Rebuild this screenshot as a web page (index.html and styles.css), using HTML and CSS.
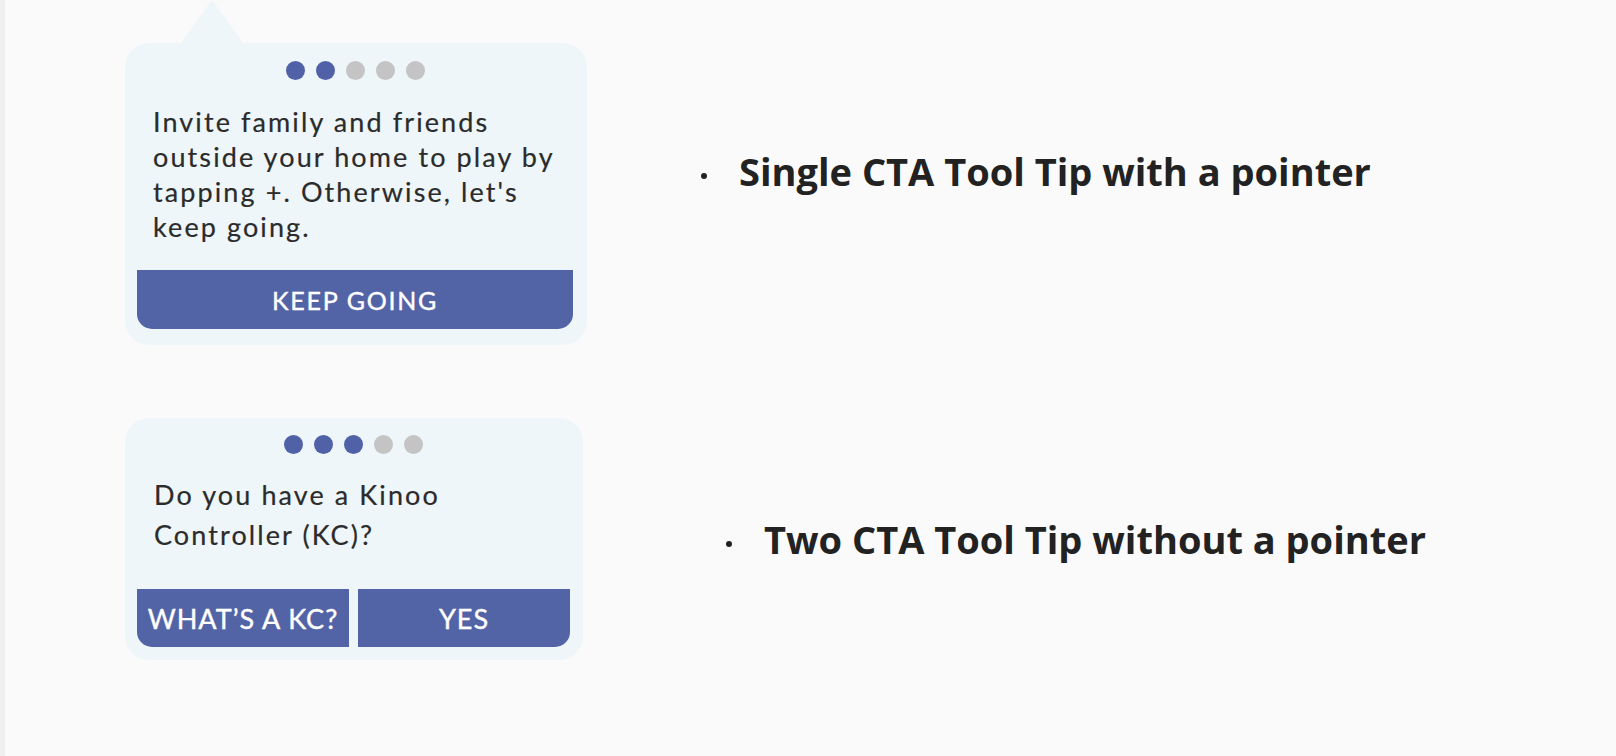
FILE: index.html
```html
<!DOCTYPE html>
<html lang="en">
<head>
<meta charset="utf-8">
<title>Tool Tips</title>
<link rel="stylesheet" href="styles.css">
</head>
<body>
<main class="page">
  <section class="row row-one">
    <div class="card card-one">
      <div class="pointer"></div>
      <div class="dots">
        <span class="dot on"></span><span class="dot on"></span><span class="dot"></span><span class="dot"></span><span class="dot"></span>
      </div>
      <p class="msg msg-one">Invite family and friends<br>outside your home to play by<br>tapping +. Otherwise, let's<br>keep going.</p>
      <div class="actions">
        <button class="btn btn-single">KEEP GOING</button>
      </div>
    </div>
    <p class="label label-one"><span class="bullet"></span>Single CTA Tool Tip with a pointer</p>
  </section>
  <section class="row row-two">
    <div class="card card-two">
      <div class="dots">
        <span class="dot on"></span><span class="dot on"></span><span class="dot on"></span><span class="dot"></span><span class="dot"></span>
      </div>
      <p class="msg msg-two">Do you have a Kinoo<br>Controller (KC)?</p>
      <div class="actions actions-two">
        <button class="btn btn-left">WHAT’S A KC?</button>
        <button class="btn btn-right">YES</button>
      </div>
    </div>
    <p class="label label-two"><span class="bullet"></span>Two CTA Tool Tip without a pointer</p>
  </section>
</main>
</body>
</html>
```
FILE: styles.css
```css
* { box-sizing: border-box; }
html, body { margin: 0; padding: 0; }
body {
  background: #fafafa;
  width: 1616px;
  height: 756px;
  overflow: hidden;
  font-family: "Open Sans", "Noto Sans", sans-serif;
}
.page {
  height: 756px;
  border-left: 5px solid #efefef;
  padding-left: 120px;
  padding-top: 43px;
}
.row {
  display: flex;
  align-items: flex-start;
}
.row-two { margin-top: 73px; }

.card {
  position: relative;
  background: #eef6fa;
  border-radius: 24px;
  display: flex;
  flex-direction: column;
}
.card-one {
  width: 462px;
  height: 302px;
  padding: 18px 14px 16px 12px;
}
.card-two {
  width: 458px;
  height: 242px;
  padding: 17px 13px 13px 12px;
}
.pointer {
  position: absolute;
  left: 55px;
  top: -43px;
  width: 64px;
  height: 44px;
  background: #eef6fa;
  clip-path: polygon(50% 0, 100% 100%, 0 100%);
}
.dots {
  display: flex;
  justify-content: center;
  gap: 11px;
  height: 19px;
}
.dot {
  width: 19px;
  height: 19px;
  border-radius: 50%;
  background: #c4c4c4;
}
.dot.on { background: #5161a8; }

.msg {
  margin: 0;
  font-family: Lato, "Noto Sans", sans-serif;
  font-size: 27px;
  color: #2b2b2b;
  letter-spacing: 2.1px;
  white-space: nowrap;
  -webkit-text-stroke: 0.2px #2b2b2b;
}
.msg-one {
  margin-top: 24px;
  padding-left: 16px;
  line-height: 35px;
}
.msg-two {
  margin-top: 21px;
  padding-left: 17px;
  line-height: 40px;
}
.actions {
  margin-top: auto;
  display: flex;
  gap: 9px;
}
.btn {
  border: 0;
  margin: 0;
  background: #5364a6;
  color: #ffffff;
  font-family: Lato, "Noto Sans", sans-serif;
  font-weight: 400;
  -webkit-text-stroke: 0.4px #ffffff;
  display: flex;
  align-items: center;
  justify-content: center;
  padding: 0;
}
.btn-single {
  width: 100%;
  height: 59px;
  font-size: 25px;
  letter-spacing: 1.7px;
  border-radius: 0 0 15px 15px;
}
.btn-left, .btn-right {
  flex: 1 1 0;
  height: 58px;
  font-size: 27px;
  letter-spacing: 1px;
}
.btn-left { border-radius: 0 0 0 15px; }
.btn-right { border-radius: 0 0 15px 0; }

.label {
  margin: 0;
  font-weight: 700;
  color: #222222;
  line-height: 1;
  white-space: nowrap;
}
.label-one {
  font-size: 38px;
  margin-left: 114px;
  margin-top: 109px;
}
.label-two {
  font-size: 38px;
  margin-left: 143px;
  margin-top: 102px;
}
.bullet {
  display: inline-block;
  width: 6px;
  height: 6px;
  border-radius: 50%;
  background: #222222;
  vertical-align: middle;
  margin-right: 32px;
}
```
